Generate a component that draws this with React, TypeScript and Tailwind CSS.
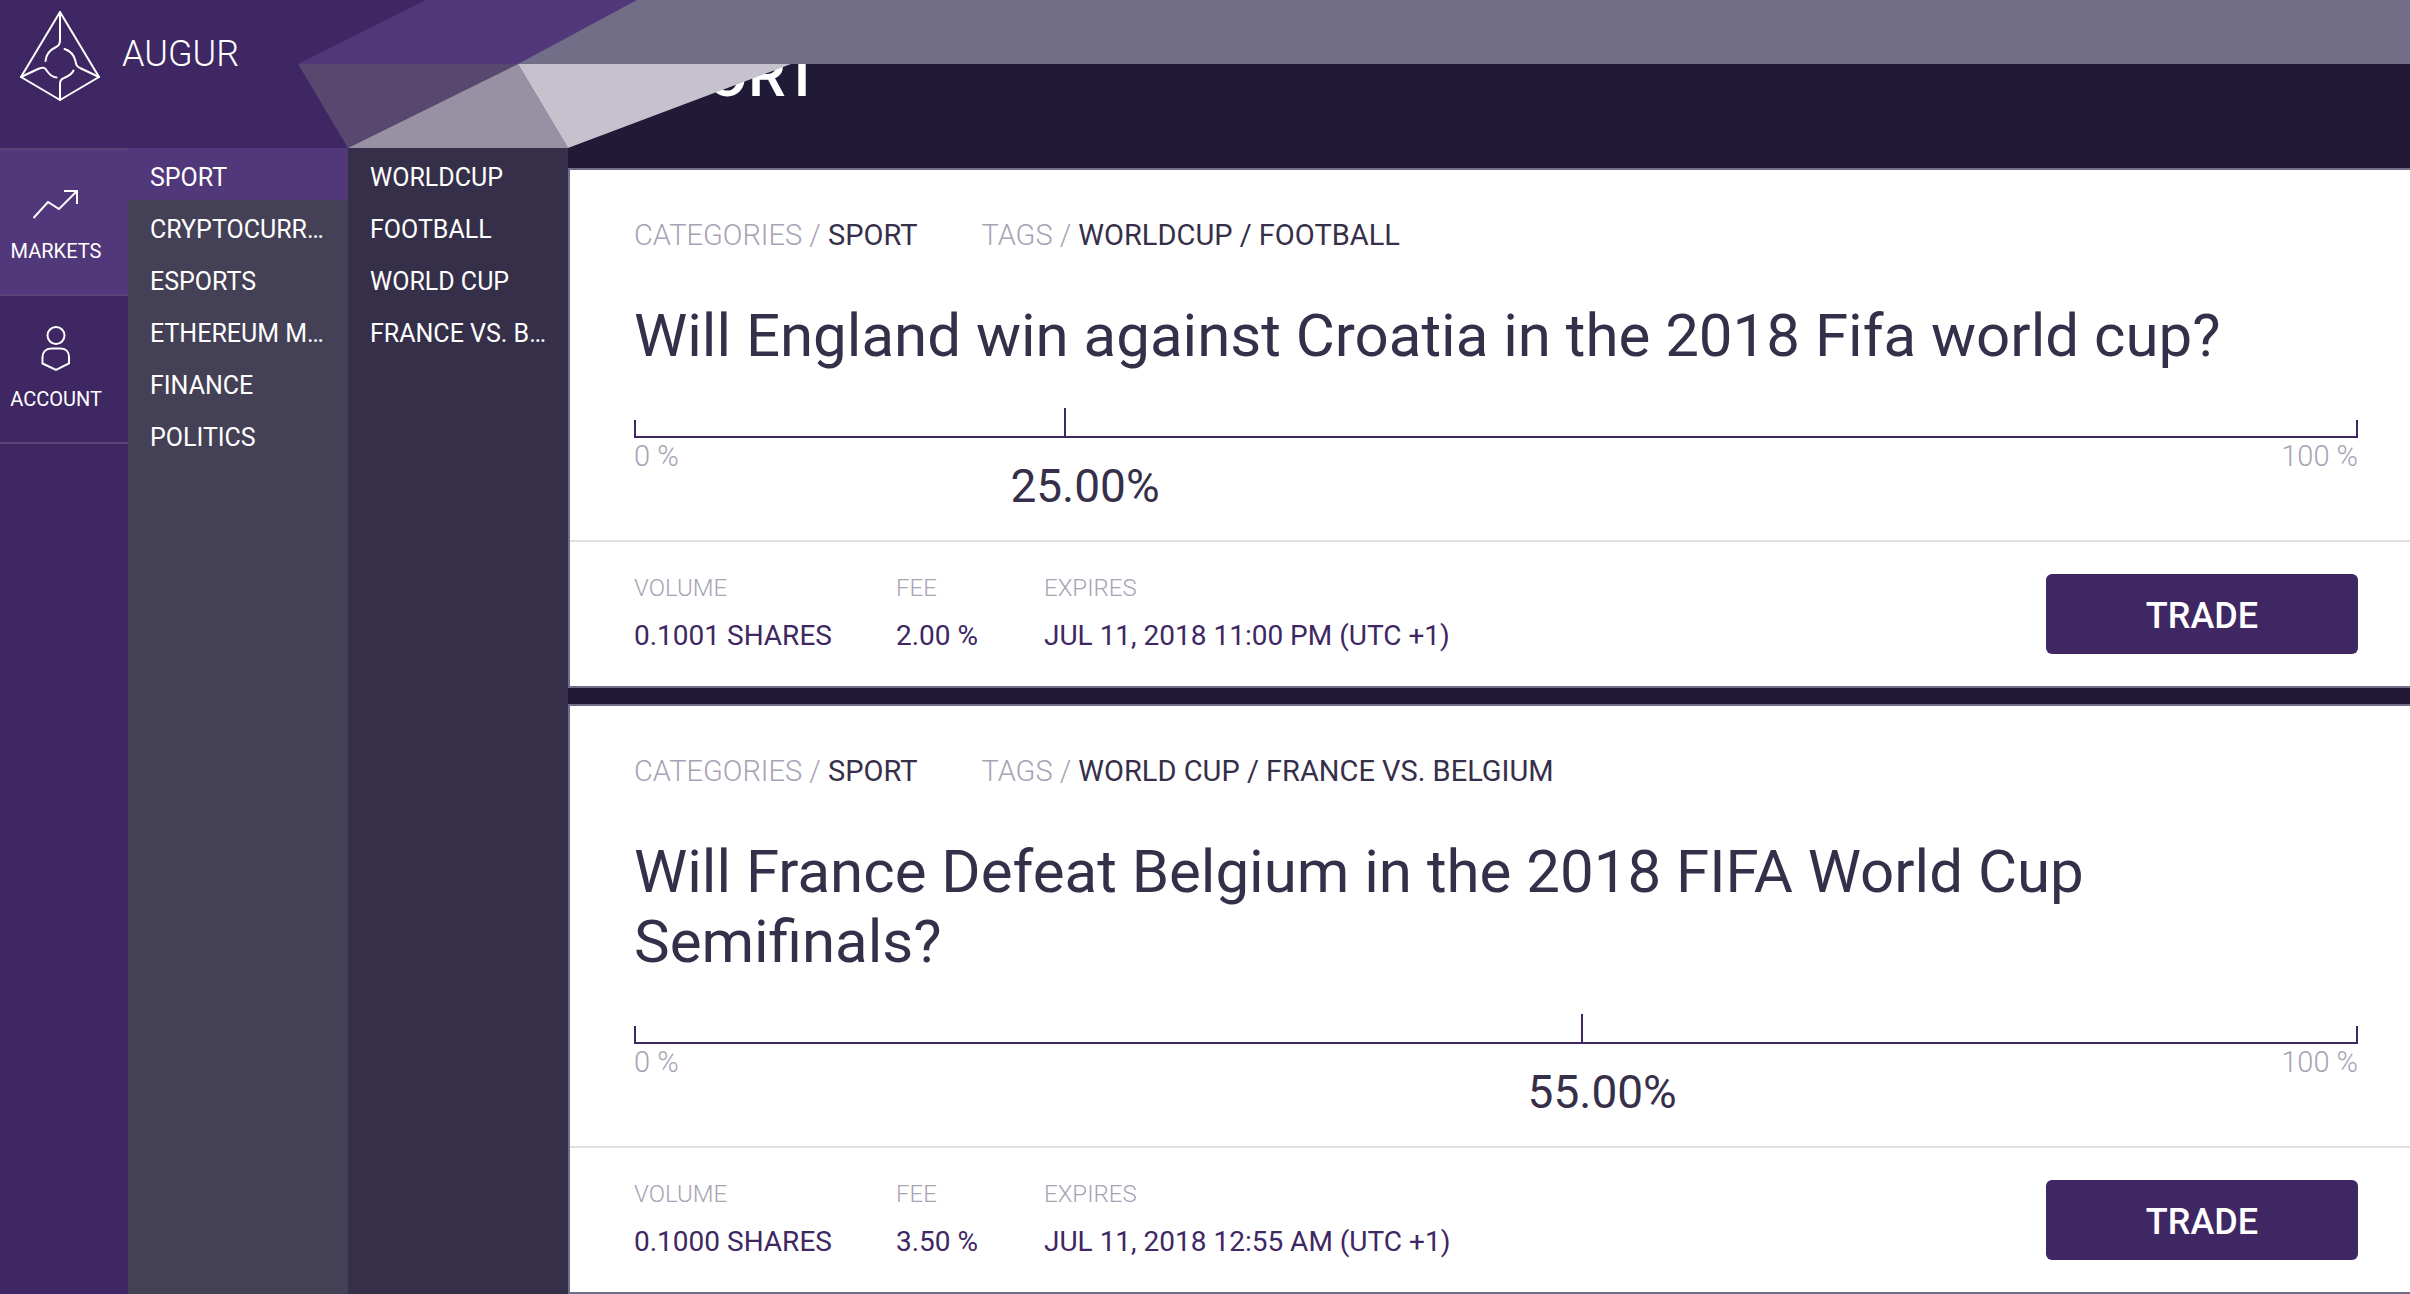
// src/App.tsx
import React from 'react';

interface Market {
  id: number;
  category: string;
  tags: string[];
  title: string;
  percent: number;
  volume: string;
  fee: string;
  expires: string;
}

const categories = ['SPORT', 'CRYPTOCURR…', 'ESPORTS', 'ETHEREUM M…', 'FINANCE', 'POLITICS'];
const tags = ['WORLDCUP', 'FOOTBALL', 'WORLD CUP', 'FRANCE VS. B…'];

const markets: Market[] = [
  {
    id: 1,
    category: 'SPORT',
    tags: ['WORLDCUP', 'FOOTBALL'],
    title: 'Will England win against Croatia in the 2018 Fifa world cup?',
    percent: 25,
    volume: '0.1001 SHARES',
    fee: '2.00 %',
    expires: 'JUL 11, 2018 11:00 PM (UTC +1)',
  },
  {
    id: 2,
    category: 'SPORT',
    tags: ['WORLD CUP', 'FRANCE VS. BELGIUM'],
    title: 'Will France Defeat Belgium in the 2018 FIFA World Cup Semifinals?',
    percent: 55,
    volume: '0.1000 SHARES',
    fee: '3.50 %',
    expires: 'JUL 11, 2018 12:55 AM (UTC +1)',
  },
];

const Logo: React.FC = () => (
  <svg width="80" height="92" viewBox="20 10 80 92" fill="none" stroke="white" strokeWidth="2" strokeLinecap="round" strokeLinejoin="round">
    <path d="M60 12 L99 77 L60 100 L21 77 Z" />
    <path d="M60 12 V40 C60 44 59 46 56 47 C50 50 46 54 45.5 61" />
    <path d="M64.500 49 C71 51 74 55 75.500 61 C76 65 76.500 66 80 68 L99 77" />
    <path d="M21 77 L38 69 C43 67 45 67 47 71 C49 74 52 77 56.500 77.500" />
    <path d="M60 100 V84 C60 81 61 79 64 78 C69 76 72 74 73.500 70.500" />
  </svg>
);

const MarketsIcon: React.FC = () => (
  <svg width="46" height="30" viewBox="34 189 46 30" fill="none" stroke="white" strokeWidth="2">
    <path d="M34.500 218 L49 202 L60 209 L78 191" />
    <path d="M65 191 H78 V204" />
  </svg>
);

const AccountIcon: React.FC = () => (
  <svg width="30" height="46" viewBox="41 327 30 46" fill="none" stroke="white" strokeWidth="2">
    <circle cx="56" cy="336.500" r="8.500" />
    <path d="M51 349.500 H61 C66 349.500 69 353 69 358 V364.500 L56 371 L42.500 364.500 V358 C42.500 353 46 349.500 51 349.500 Z" />
  </svg>
);

const Facets: React.FC = () => (
  <svg className="absolute left-0 top-0 z-10 pointer-events-none" width="800" height="148" viewBox="0 0 800 148">
    <polygon points="298,64 426,0 637,0 518,64" fill="#51387a" />
    <polygon points="298,64 518,64 348,148" fill="#58476f" />
    <polygon points="348,148 518,64 568,148" fill="#9691a3" />
    <polygon points="518,64 791,64 568,148" fill="#c5c2cd" />
  </svg>
);

const SideMenu: React.FC<{ items: string[]; active?: string; label: string; className: string }> = ({
  items,
  active,
  label,
  className,
}) => (
  <nav aria-label={label} className={`flex w-[220px] flex-col ${className}`}>
    {items.map((item) => (
      <a
        key={item}
        href="#"
        className={`flex h-[52px] items-center whitespace-nowrap pl-[22px] pt-2 text-[25px]/8 ${item === active ? 'bg-[#51387a]' : ''}`}
      >
        {item}
      </a>
    ))}
  </nav>
);

const Stat: React.FC<{ label: string; value: string; className?: string }> = ({ label, value, className = '' }) => (
  <div className={className}>
    <dt className="text-2xl/8 font-light text-[#a7a3b4]">{label}</dt>
    <dd className="mt-4 text-[28px]/8 text-[#3e2763]">{value}</dd>
  </div>
);

const MarketCard: React.FC<{ market: Market }> = ({ market }) => (
  <article className="border-2 border-r-0 border-[#736e87] bg-white text-[#362f49]">
    <div className="pl-16 pr-[52px] pt-[47px]">
      <div className="flex gap-16 text-[29px]/9">
        <p>
          <span className="font-light text-[#a7a3b4]">CATEGORIES / </span>
          {market.category}
        </p>
        <p>
          <span className="font-light text-[#a7a3b4]">TAGS / </span>
          {market.tags.join(' / ')}
        </p>
      </div>
      <h2 className="mt-12 text-[60px]/[70px]">{market.title}</h2>
      <div className="relative mt-[37px] h-[30px] border-b-2 border-[#3e2763]">
        <span className="absolute bottom-0 left-0 h-4 w-0.5 bg-[#3e2763]" />
        <span className="absolute bottom-0 right-0 h-4 w-0.5 bg-[#3e2763]" />
        <span
          className="absolute bottom-0 h-7 w-0.5 -translate-x-1/2 bg-[#3e2763]"
          style={{ left: `${market.percent}%` }}
        />
        <span
          className="absolute top-[52px] -translate-x-1/2 pl-10 text-[46px]/[52px]"
          style={{ left: `${market.percent}%` }}
        >
          {market.percent.toFixed(2)}%
        </span>
      </div>
      <div className="flex h-[102px] justify-between text-[29px]/9 font-light text-[#a7a3b4]">
        <span>0 %</span>
        <span>100 %</span>
      </div>
    </div>
    <div className="flex items-start justify-between border-t-2 border-[#e0e0e0] pb-8 pl-16 pr-[52px] pt-8">
      <dl className="-mt-0.5 flex">
        <Stat label="VOLUME" value={market.volume} className="w-[262px]" />
        <Stat label="FEE" value={market.fee} className="w-[148px]" />
        <Stat label="EXPIRES" value={market.expires} />
      </dl>
      <button type="button" className="h-20 w-[312px] rounded-md bg-[#3e2763] pt-1 text-4xl font-medium text-white">
        TRADE
      </button>
    </div>
  </article>
);

const App: React.FC = () => {
  return (
    <div className="relative flex h-screen overflow-hidden bg-[#211a36] font-['Roboto','Liberation_Sans',sans-serif] text-white">
      <div className="flex w-[568px] shrink-0 flex-col">
        <a href="#" className="flex h-[148px] items-start gap-[22px] bg-[#3e2763] pl-5 pt-2.5">
          <Logo />
          <span className="pt-5 text-4xl/[48px] font-light">AUGUR</span>
        </a>
        <div className="flex grow">
          <nav aria-label="Main" className="flex w-32 flex-col bg-[#3e2763] text-xl/6">
            <a href="#" className="flex h-[148px] flex-col items-center border-y-2 border-[#5a4379] bg-[#51387a] pr-4 pt-[39px]">
              <MarketsIcon />
              <span className="mt-5">MARKETS</span>
            </a>
            <a href="#" className="flex h-[148px] flex-col items-center border-b-2 border-[#5a4379] pr-4 pt-[30px]">
              <AccountIcon />
              <span className="mt-[15px]">ACCOUNT</span>
            </a>
          </nav>
          <SideMenu label="Categories" items={categories} active="SPORT" className="bg-[#444056]" />
          <SideMenu label="Tags" items={tags} className="bg-[#362f49]" />
        </div>
      </div>

      <main className="min-w-0 grow">
        <header className="h-[168px] pl-16 pt-11">
          <h1 className="text-[60px]/[64px] font-medium">SPORT</h1>
        </header>
        <div className="flex flex-col gap-4">
          {markets.map((market) => (
            <MarketCard key={market.id} market={market} />
          ))}
        </div>
      </main>

      <div className="absolute left-[518px] right-0 top-0 h-16 bg-[#736e87]" />
      <Facets />
    </div>
  );
};

export default App;
